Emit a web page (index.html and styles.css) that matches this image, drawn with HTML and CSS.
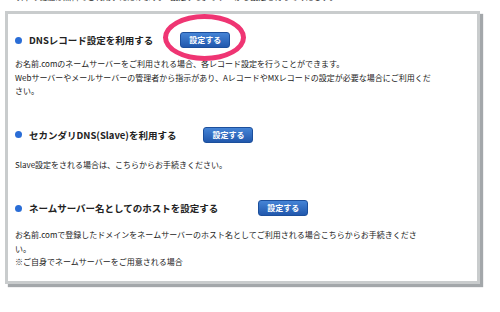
FILE: index.html
```html
<!DOCTYPE html>
<html lang="ja">
<head>
	<meta charset="UTF-8">
	<title>ネームサーバー設定</title>
	<link rel="stylesheet" href="styles.css">
</head>
<body>
<p class="intro">以下の機能は無料でご利用いただけます。「設定する」ボタンから設定を行ってください。</p>
<div class="box">
	<div class="item item_first">
		<div class="item_head">
			<h2>DNSレコード設定を利用する</h2>
			<span class="btn_wrap">
				<a class="btn" href="">設定する</a>
				<span class="mark"></span>
			</span>
		</div>
		<p>お名前.comのネームサーバーをご利用される場合、各レコード設定を行うことができます。<br>Webサーバーやメールサーバーの管理者から指示があり、AレコードやMXレコードの設定が必要な場合にご利用ください。</p>
	</div>
	<div class="item">
		<div class="item_head">
			<h2>セカンダリDNS(Slave)を利用する</h2>
			<a class="btn" href="">設定する</a>
		</div>
		<p>Slave設定をされる場合は、こちらからお手続きください。</p>
	</div>
	<div class="item item_last">
		<div class="item_head item_head_wide">
			<h2>ネームサーバー名としてのホストを設定する</h2>
			<a class="btn" href="">設定する</a>
		</div>
		<p>お名前.comで登録したドメインをネームサーバーのホスト名としてご利用される場合こちらからお手続きください。<br>※ご自身でネームサーバーをご用意される場合</p>
	</div>
</div>
</body>
</html>
```

FILE: styles.css
```css
*{
	margin:0;
	padding:0;
}
body{
	width:500px;
	height:312px;
	overflow:hidden;
	background:#fff;
	color:#1a1a1a;
	font-family:"Noto Sans CJK JP","Liberation Sans",sans-serif;
}
a{
	text-decoration:none;
}
.intro{
	margin:-10px 0 0 15px;
	font-size:8px;
	line-height:13px;
}
.box{
	width:455px;
	margin:8px 0 0 5px;
	padding:18px 7px 12px;
	border:3px solid #c9cccd;
	box-shadow:3px 3px 1px #a3a7aa;
	background:#fff;
}
.item{
	margin-top:29px;
}
.item_first{
	margin-top:0;
}
.item_head{
	display:flex;
	align-items:center;
	gap:27px;
	height:16px;
}
.item_head_wide{
	gap:40px;
}
.item_head h2{
	display:flex;
	align-items:center;
	gap:7px;
	font-size:9.5px;
	line-height:16px;
	font-weight:bold;
	color:#222;
}
.item_head h2::before{
	content:"";
	width:7px;
	height:7px;
	border-radius:50%;
	background:#2a6dd6;
}
.btn_wrap{
	position:relative;
	display:block;
}
.btn{
	display:block;
	width:48px;
	height:14px;
	line-height:14px;
	border:1px solid #1c4f9c;
	border-radius:3px;
	background:linear-gradient(#4584d6,#2158ad);
	color:#fff;
	font-size:8px;
	font-weight:bold;
	text-align:center;
}
.mark{
	position:absolute;
	left:-17px;
	top:-18px;
	width:73px;
	height:37px;
	border:5px solid #ef3573;
	border-radius:50%;
}
.item p{
	width:422px;
	margin-top:15px;
	font-size:8px;
	line-height:13.5px;
}
.item_first p{
	margin-top:9px;
}
.item_last p{
	width:410px;
	margin-top:12px;
}
```
